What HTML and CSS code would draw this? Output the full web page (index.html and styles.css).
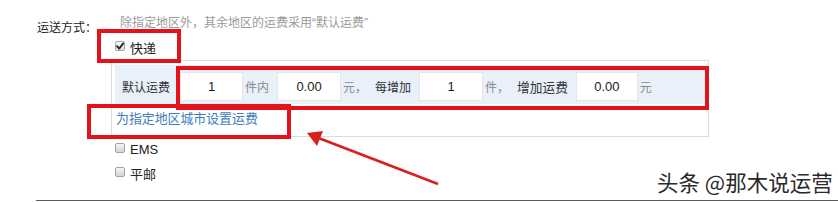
FILE: index.html
```html
<!DOCTYPE html>
<html lang="zh-CN">
<head>
<meta charset="utf-8">
<title>运送方式</title>
<link rel="stylesheet" href="styles.css">
</head>
<body>
<div class="page">
  <div class="field">
    <div class="label">运送方式：</div>
    <div class="content">
      <div class="hint">除指定地区外，其余地区的运费采用“默认运费”</div>
      <div class="opt opt-first"><span class="cb checked"><svg viewBox="0 0 10 10" width="10" height="10"><path d="M2 5.2 L4.2 7.6 L8.2 2.4" fill="none" stroke="#222" stroke-width="1.8" stroke-linecap="round" stroke-linejoin="round"/></svg></span><span class="opt-text">快递</span></div>
      <div class="panel">
        <div class="rate-row">
          <span class="rl rl-first">默认运费</span>
          <input class="num w63" type="text" value="1">
          <span class="unit">件内</span>
          <input class="num w64" type="text" value="0.00">
          <span class="unit">元，</span>
          <span class="rl">每增加</span>
          <input class="num w64" type="text" value="1">
          <span class="unit">件，</span>
          <span class="rl rl-wide">增加运费</span>
          <input class="num w62" type="text" value="0.00">
          <span class="unit">元</span>
        </div>
        <div class="link-row"><a class="link" href="#">为指定地区城市设置运费</a></div>
      </div>
      <div class="opt"><span class="cb"></span><span class="opt-text">EMS</span></div>
      <div class="opt opt-last"><span class="cb"></span><span class="opt-text">平邮</span></div>
    </div>
  </div>
  <div class="rule"></div>

  <div class="mark mark-1"></div>
  <div class="mark mark-2"></div>
  <div class="mark mark-3"></div>
  <svg class="arrow" width="838" height="202" viewBox="0 0 838 202">
    <line x1="438" y1="184" x2="316" y2="137" stroke="#d8201e" stroke-width="2.6"/>
    <polygon points="307,133 323,131 317,146" fill="#d8201e"/>
  </svg>
  <div class="watermark">头条 @那木说运营</div>
</div>
</body>
</html>
```

FILE: styles.css
```css
html, body {
  margin: 0;
  padding: 0;
  background: #fff;
}
.page {
  position: relative;
  width: 838px;
  height: 202px;
  overflow: hidden;
  font-family: "Liberation Sans", "Noto Sans CJK SC", sans-serif;
  font-size: 12px;
  color: #333;
}
.field {
  display: flex;
  padding-top: 15px;
}
.label {
  box-sizing: border-box;
  width: 111px;
  padding-left: 37px;
  padding-top: 5px;
  line-height: 16px;
  color: #222;
}
.content {
  display: flex;
  flex-direction: column;
}
.hint {
  margin-left: 9px;
  line-height: 16px;
  color: #9a9a9a;
}
.opt {
  display: flex;
  align-items: center;
  height: 16px;
  padding-left: 4px;
  margin-top: 8px;
}
.opt-first {
  margin-top: 7px;
}
.cb {
  box-sizing: border-box;
  width: 10px;
  height: 10px;
  border: 1px solid #a4a4a4;
  border-radius: 2px;
  background: linear-gradient(#f4f4f4, #d6d6d6);
  margin-right: 5px;
  display: flex;
  align-items: center;
  justify-content: center;
}
.cb svg {
  display: block;
  flex: none;
}
.cb.checked {
  background: linear-gradient(#fafafa, #e2e2e2);
}
.opt-text {
  font-size: 13px;
  color: #222;
  padding-top: 2px;
}
.panel {
  box-sizing: border-box;
  width: 598px;
  margin-top: 6px;
  border: 1px solid #dcdcdc;
  padding: 4px 3px 3px 3px;
}
.panel + .opt {
  margin-top: 3px;
}
.rate-row {
  display: flex;
  align-items: center;
  height: 39px;
  padding-top: 3px;
  box-sizing: border-box;
  background: #e8f0fa;
}
.rl {
  color: #333;
  margin-right: 8px;
  white-space: nowrap;
}
.rl-first {
  padding-left: 7px;
  margin-right: 10px;
  font-size: 12px;
}
.rl-wide {
  font-size: 12.7px;
  margin-right: 8px;
}
.unit {
  color: #8a8a8a;
  margin-left: 2px;
  margin-right: 8px;
  white-space: nowrap;
}
.num {
  box-sizing: border-box;
  height: 29px;
  margin: 0;
  padding: 0;
  border: 1px solid #e6e6e6;
  background: #fff;
  text-align: center;
  font-family: "Liberation Sans", sans-serif;
  font-size: 13px;
  color: #222;
  outline: none;
}
.w62 { width: 62px; }
.w63 { width: 63px; }
.w64 { width: 64px; }
.link-row {
  height: 29px;
  line-height: 29px;
  padding-left: 1px;
}
.link {
  color: #3d7cc0;
  text-decoration: none;
  font-size: 12.9px;
}
.rule {
  position: absolute;
  left: 36px;
  right: 0;
  top: 200px;
  height: 1px;
  background: #5e5e5e;
}
.mark {
  position: absolute;
  box-sizing: border-box;
  border: 4px solid #e3121b;
}
.mark-1 {
  left: 97px;
  top: 29px;
  width: 84px;
  height: 34px;
}
.mark-2 {
  left: 176px;
  top: 66px;
  width: 533px;
  height: 44px;
}
.mark-3 {
  left: 87px;
  top: 104px;
  width: 204px;
  height: 35px;
}
.arrow {
  position: absolute;
  left: 0;
  top: 0;
}
.watermark {
  position: absolute;
  left: 657px;
  top: 169px;
  font-family: "Noto Sans CJK SC", sans-serif;
  font-size: 21.5px;
  line-height: 26px;
  color: #2a2a2a;
  white-space: nowrap;
  text-shadow: 1px 1px 0 #fff, -1px -1px 0 #fff, 1px -1px 0 #fff, -1px 1px 0 #fff;
}
```
